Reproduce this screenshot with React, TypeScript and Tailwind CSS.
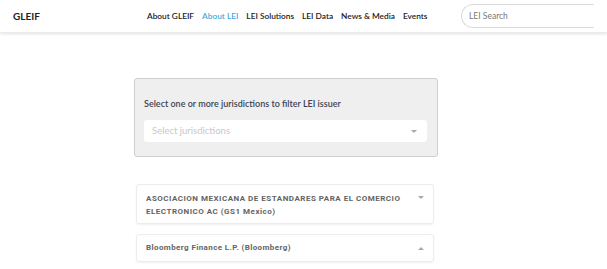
import React from 'react';

const navItems = ['About GLEIF', 'About LEI', 'LEI Solutions', 'LEI Data', 'News & Media', 'Events'];

const Caret: React.FC<{ up?: boolean }> = ({ up }) => (
  <svg width="6" height="3" viewBox="0 0 6 3" className="shrink-0">
    {up ? <path d="M0 3 L3 0 L6 3 Z" fill="#a8a8a8" /> : <path d="M0 0 L6 0 L3 3 Z" fill="#a8a8a8" />}
  </svg>
);

const App: React.FC = () => {
  return (
    <div className="w-[607px] h-[269px] bg-white overflow-hidden font-['Lato',sans-serif]">
      {/* Header */}
      <header className="h-[33px] flex items-center shadow-[0_1px_3px_rgba(0,0,0,0.12)] border-b border-[#ececec]">
        <div className="w-[147px] shrink-0 pl-[13px] text-[10px] font-bold text-[#222]">GLEIF</div>
        <nav className="flex items-center gap-[8px] shrink-0 whitespace-nowrap text-[8.3px] text-[#222] font-semibold">
          {navItems.map((item) => (
            <span key={item} className={item === 'About LEI' ? 'text-[#45ace0]' : ''}>
              {item}
            </span>
          ))}
        </nav>
        <div className="ml-auto mr-[13px] shrink-0 w-[133px] h-[24px] rounded-l-full border border-r-0 border-[#dcdcdc] flex items-center pl-[7px] text-[8.5px] text-[#777]">
          LEI Search
        </div>
      </header>

      {/* Filter panel */}
      <div className="ml-[134px] mt-[45px] w-[304px] h-[79px] bg-[#efefef] border border-[#cfcfcf] rounded-[3px] pl-[9px] pr-[10px] pt-[18px]">
        <p className="text-[9px] font-semibold text-[#3d4453] leading-[13px]">
          Select one or more jurisdictions to filter LEI issuer
        </p>
        <div className="mt-[10px] h-[22px] bg-white rounded-[3px] flex items-center justify-between pl-[8px] pr-[10px]">
          <span className="text-[9.5px] text-[#c8c8c8]">Select jurisdictions</span>
          <Caret />
        </div>
      </div>

      {/* Issuer list */}
      <div className="ml-[136px] mt-[27px] w-[298px] flex flex-col gap-[10px] font-['Roboto',sans-serif]">
        <div className="h-[40px] border border-[#ececec] rounded-[3px] shadow-[0_1px_2px_rgba(0,0,0,0.06)] flex justify-between pl-[9px] pr-[9px] pt-[7px]">
          <p className="text-[8px] font-bold tracking-[0.5px] leading-[13px] text-[#646464]">
            ASOCIACION MEXICANA DE ESTANDARES PARA EL COMERCIO<br />ELECTRONICO AC (GS1 Mexico)
          </p>
          <div className="pt-[4px]"><Caret /></div>
        </div>
        <div className="h-[28px] border border-[#ececec] rounded-[3px] shadow-[0_1px_2px_rgba(0,0,0,0.06)] flex items-center justify-between pl-[9px] pr-[9px]">
          <p className="text-[8px] font-bold tracking-[0.4px] text-[#646464]">Bloomberg Finance L.P. (Bloomberg)</p>
          <Caret up />
        </div>
      </div>
    </div>
  );
};

export default App;
